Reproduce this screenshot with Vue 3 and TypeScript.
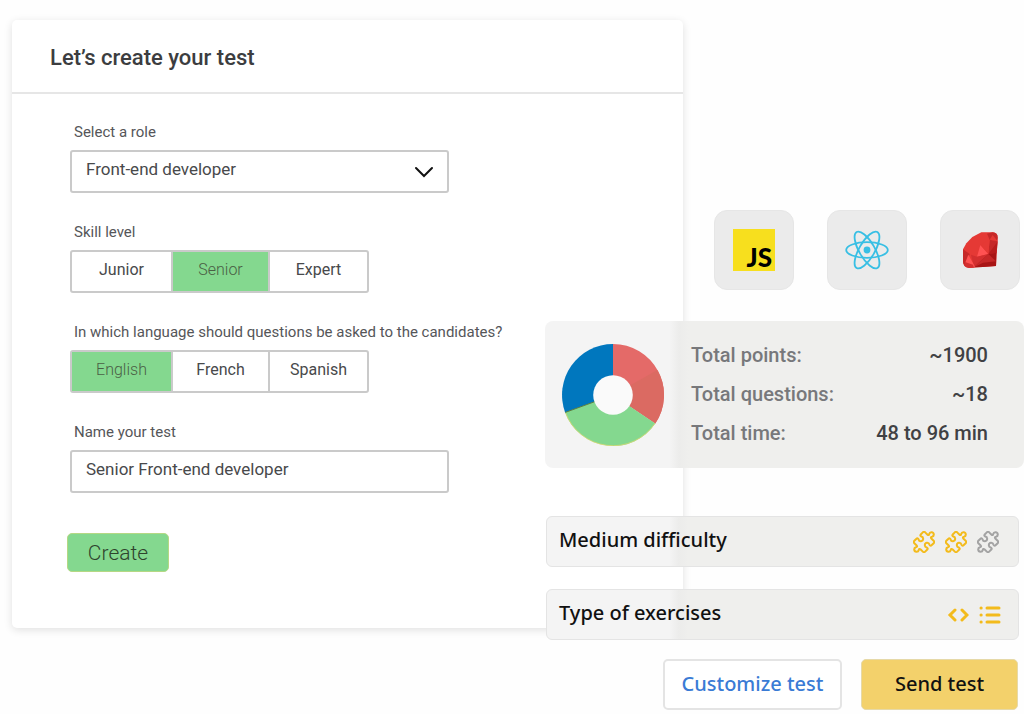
<script setup lang="ts">
import { ref } from 'vue'

interface Stat {
  label: string
  value: string
}

const roles: string[] = ['Front-end developer', 'Back-end developer', 'Full-stack developer']
const levels: string[] = ['Junior', 'Senior', 'Expert']
const languages: string[] = ['English', 'French', 'Spanish']
const stats: Stat[] = [
  { label: 'Total points:', value: '~1900' },
  { label: 'Total questions:', value: '~18' },
  { label: 'Total time:', value: '48 to 96 min' },
]
const difficulty: boolean[] = [true, true, false]

const role = ref<string>('Front-end developer')
const level = ref<string>('Senior')
const language = ref<string>('English')
const testName = ref<string>('Senior Front-end developer')
</script>

<template>
  <main class="page">
    <form class="card" @submit.prevent>
      <header class="card-head">
        <h1>Let’s create your test</h1>
      </header>
      <div class="fields">
        <div class="field">
          <label class="caption" for="role">Select a role</label>
          <div class="select-wrap">
            <select id="role" v-model="role" class="box">
              <option v-for="r in roles" :key="r">{{ r }}</option>
            </select>
            <svg class="chevron" viewBox="0 0 20 12" aria-hidden="true">
              <path d="M2 2l8 8 8-8" />
            </svg>
          </div>
        </div>

        <fieldset class="field">
          <legend class="caption">Skill level</legend>
          <div class="segments">
            <label v-for="l in levels" :key="l" class="segment" :class="{ active: level === l }">
              <input v-model="level" type="radio" name="level" :value="l" />{{ l }}
            </label>
          </div>
        </fieldset>

        <fieldset class="field">
          <legend class="caption">In which language should questions be asked to the candidates?</legend>
          <div class="segments">
            <label v-for="l in languages" :key="l" class="segment" :class="{ active: language === l }">
              <input v-model="language" type="radio" name="language" :value="l" />{{ l }}
            </label>
          </div>
        </fieldset>

        <div class="field">
          <label class="caption" for="test-name">Name your test</label>
          <input id="test-name" v-model="testName" class="box" type="text" />
        </div>

        <button class="create" type="submit">Create</button>
      </div>
    </form>

    <section class="side">
      <div class="tiles">
        <div class="tile">
          <svg viewBox="0 0 42 42" width="42" height="42" overflow="visible" role="img" aria-label="JavaScript">
            <rect width="42" height="42" fill="#f7df1e" />
            <text class="js" x="39" y="38" text-anchor="end">JS</text>
          </svg>
        </div>
        <div class="tile">
          <svg viewBox="-22 -20 44 40" width="44" height="40" role="img" aria-label="React">
            <circle r="3.4" fill="#38bfe4" />
            <g fill="none" stroke="#38bfe4" stroke-width="1.8">
              <ellipse rx="20.8" ry="7.8" />
              <ellipse rx="20.8" ry="7.8" transform="rotate(60)" />
              <ellipse rx="20.8" ry="7.8" transform="rotate(120)" />
            </g>
          </svg>
        </div>
        <div class="tile">
          <svg viewBox="0 0 105 108" width="35" height="36" role="img" aria-label="Ruby">
            <path d="M0 52L10 34L28 15L55 1H89Q104 2 104 17L99 102L18 108Q0 106 0 88Z" fill="#e53935" />
            <path d="M72 5L89 1Q104 2 104 17L103 28L80 23Z" fill="#c62828" />
            <path d="M80 23L104 28L101 64L76 66Z" fill="#c62828" />
            <path d="M80 23L89 9L104 28Z" fill="#e53935" />
            <path d="M103 30L76 66L100 62Z" fill="#b71c1c" />
            <path d="M52 39L76 66L42 74Z" fill="#ff5252" />
            <path d="M52 39L80 23L76 66Z" fill="#e53935" />
            <path d="M24 68L42 74L76 66L33 106Z" fill="#d32f2f" />
            <path d="M76 66L100 62L99 102L60 105L33 106Z" fill="#a81515" />
            <path d="M76 66L99 88L60 92L33 106Z" fill="#c62828" />
            <path d="M0 52L20 66L8 101Q0 98 0 88Z" fill="#c62828" />
            <path d="M16 68L36 104L18 108L6 94Z" fill="#ff5252" />
            <path d="M6 90L30 98L33 107L18 108Q6 106 4 100Z" fill="#d32f2f" />
          </svg>
        </div>
      </div>

      <div class="summary">
        <svg class="donut" viewBox="-51 -51 102 102" role="img" aria-label="Points by category">
          <path d="M0 0V-51A51 51 0 0 1 42.3 28.5Z" fill="#e46a68" />
          <path d="M0 0L44.4 -25.1A51 51 0 0 1 42.3 28.5Z" fill="#db6a62" />
          <path d="M0 0L42.3 28.5A51 51 0 0 1 -47.9 17.4Z" fill="#84d88f" />
          <path d="M42 28.3A50.6 50.6 0 0 1 -47.6 17.3" fill="none" stroke="#d9d870" stroke-width="0.8" />
          <path d="M0 0L-47.9 17.4A51 51 0 0 1 0 -51Z" fill="#0077be" />
          <path d="M0 0L-47.7 17.4" stroke="#5d7f3c" stroke-width="1" />
          <circle r="19.8" fill="#fafafa" />
        </svg>
        <dl class="stats">
          <div v-for="s in stats" :key="s.label" class="stat">
            <dt>{{ s.label }}</dt>
            <dd>{{ s.value }}</dd>
          </div>
        </dl>
      </div>

      <div class="bars">
        <div class="bar">
          <span>Medium difficulty</span>
          <span class="icons">
            <svg
              v-for="(on, i) in difficulty"
              :key="i"
              class="puzzle"
              :class="{ off: !on }"
              viewBox="-33 -33 66 66"
              aria-hidden="true"
            >
              <path
                transform="rotate(45)"
                d="M-18 -23H-9C-4 -23 -4 -26 -6 -28A7 7 0 1 1 6 -28C4 -26 4 -23 9 -23H18Q23 -23 23 -18V-10C23 -5 20 -5 17 -6A7 7 0 1 0 17 6C20 5 23 5 23 10V18Q23 23 18 23H9C4 23 4 26 6 28A7 7 0 1 1 -6 28C-4 26 -4 23 -9 23H-18Q-23 23 -23 18V10C-23 5 -20 5 -17 6A7 7 0 1 0 -17 -6C-20 -5 -23 -5 -23 -10V-18Q-23 -23 -18 -23Z"
              />
            </svg>
          </span>
        </div>
        <div class="bar">
          <span>Type of exercises</span>
          <span class="icons">
            <svg class="line" viewBox="0 0 22 20" width="22" height="20" aria-hidden="true">
              <path d="M8 5L3 10L8 15M15 5L20 10L15 15" />
            </svg>
            <svg class="line" viewBox="0 0 22 20" width="22" height="20" aria-hidden="true">
              <path d="M8 3H20M8 10H20M8 17H20M2 3H2.200M2 10H2.200M2 17H2.200" />
            </svg>
          </span>
        </div>
      </div>

      <div class="actions">
        <button class="btn outline" type="button">Customize test</button>
        <button class="btn solid" type="button">Send test</button>
      </div>
    </section>
  </main>
</template>

<style>
body {
  margin: 0;
  background: #fefefe;
}
</style>

<style scoped>
* {
  box-sizing: border-box;
}

.page {
  display: grid;
  grid-template-columns: 12px 533fr 138fr 341fr;
  align-items: start;
  padding-bottom: 4px;
  font-family: Roboto, 'Liberation Sans', sans-serif;
  color: #48494b;
}

.card {
  grid-area: 1 / 2 / 2 / 4;
  margin-top: 20px;
  background: #fff;
  border-radius: 5px;
  box-shadow: 0 2px 8px rgba(0, 0, 0, 0.12);
}

.card-head {
  padding: 23px 38px 19px;
  border-bottom: 2px solid #e6e6e6;
}

h1 {
  margin: 0;
  font-size: 22px;
  line-height: 30px;
  font-weight: 500;
  color: #3c3d40;
}

.fields {
  display: flex;
  flex-direction: column;
  align-items: flex-start;
  gap: 29px;
  padding: 28px 58px 56px;
}

.field {
  margin: 0;
  padding: 0;
  border: 0;
  width: 379px;
  max-width: 100%;
}

.caption {
  display: block;
  margin-bottom: 8px;
  padding: 0 4px;
  font-size: 15px;
  line-height: 20px;
  color: #555659;
  white-space: nowrap;
}

.box {
  display: block;
  width: 100%;
  height: 43px;
  padding: 0 14px 5px;
  border: 2px solid #cacaca;
  border-radius: 3px;
  background: #fff;
  font: 400 17px Roboto, 'Liberation Sans', sans-serif;
  color: #48494b;
  appearance: none;
}

.select-wrap {
  display: grid;
  align-items: center;
}

.select-wrap > * {
  grid-area: 1 / 1;
}

.chevron {
  justify-self: end;
  width: 20px;
  height: 12px;
  margin-right: 15px;
  fill: none;
  stroke: #111;
  stroke-width: 2;
  stroke-linecap: round;
  pointer-events: none;
}

.segments {
  display: grid;
  grid-template-columns: 99fr 97fr 99fr;
  width: 299px;
  height: 43px;
  border: 2px solid #cacaca;
  border-radius: 3px;
}

.segment {
  display: flex;
  align-items: center;
  justify-content: center;
  padding-bottom: 4px;
  font-size: 16px;
}

.segment + .segment {
  border-left: 2px solid #cacaca;
}

.segment.active {
  background: #84d88f;
  color: #4a5f45;
  font-weight: 300;
}

.segment input {
  appearance: none;
  width: 0;
  height: 0;
  margin: 0;
}

.create {
  margin: 11px 0 0 -3px;
  width: 102px;
  height: 39px;
  border: 1px solid #b5d884;
  border-radius: 5px;
  background: #84d88f;
  font: 300 21px Roboto, 'Liberation Sans', sans-serif;
  color: #2f432d;
}

.side {
  grid-area: 1 / 3 / 2 / 5;
  margin-top: 210px;
}

.tiles {
  display: flex;
  justify-content: flex-end;
  gap: 33px;
  padding-right: 4px;
}

.tile {
  display: flex;
  align-items: center;
  justify-content: center;
  width: 80px;
  height: 80px;
  border: 1px solid #e6e6e6;
  border-radius: 13px;
  background: #ebebeb;
}

.js {
  font: 900 26px Lato, sans-serif;
}

.summary,
.bar {
  background: linear-gradient(to right, #f4f4f4 26%, #ececeb 28%, #efefed 30%);
}

.summary {
  display: flex;
  align-items: center;
  gap: 27px;
  margin-top: 31px;
  padding: 15px 36px 15px 17px;
  border-radius: 8px;
}

.donut {
  width: 102px;
  height: 102px;
  flex: none;
}

.stats {
  flex: 1;
  margin: 0;
  font-size: 20px;
  line-height: 39px;
  font-weight: 500;
}

.stat {
  display: flex;
  justify-content: space-between;
}

dt {
  color: #77787b;
}

dd {
  margin: 0;
  color: #404144;
}

.bars {
  display: grid;
  gap: 22px;
  margin: 48px 5px 0 1px;
}

.bar {
  display: flex;
  align-items: center;
  justify-content: space-between;
  height: 51px;
  padding: 0 19px 4px 12px;
  border: 1px solid #e4e4e4;
  border-radius: 6px;
  font: 500 20px 'Noto Sans', sans-serif;
  color: #111;
}

.icons {
  display: flex;
  gap: 10px;
  padding-top: 4px;
}

.puzzle {
  width: 22px;
  height: 22px;
  fill: none;
  stroke: #f3bb1c;
  stroke-width: 6;
  stroke-linejoin: round;
}

.puzzle.off {
  stroke: #a3a3a3;
}

.line {
  fill: none;
  stroke: #f3bb1c;
  stroke-width: 3;
  stroke-linecap: round;
}

.bar:last-child .icons {
  margin-right: -2px;
}

.actions {
  display: flex;
  justify-content: flex-end;
  gap: 19px;
  margin: 19px 6px 0 0;
}

.btn {
  height: 51px;
  padding-bottom: 3px;
  border-radius: 5px;
  font: 500 20px 'Noto Sans', sans-serif;
}

.outline {
  width: 179px;
  border: 2px solid #e4e4e4;
  background: #fff;
  color: #3a7bd5;
}

.solid {
  width: 157px;
  border: 1px solid #e6d9a8;
  background: #f3d16b;
  color: #111;
}
</style>
